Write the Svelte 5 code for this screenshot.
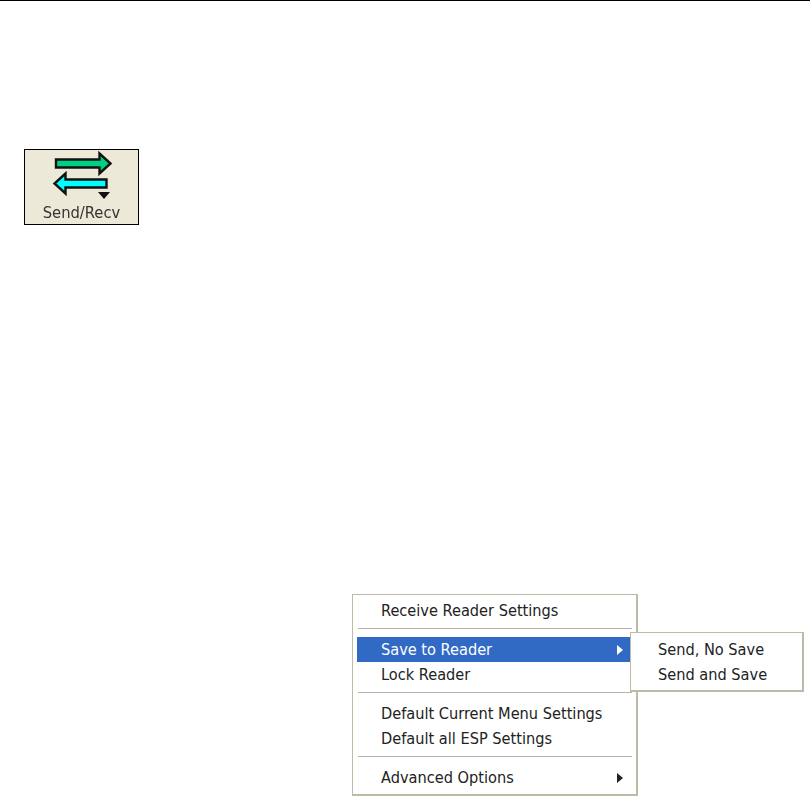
<script>
  const groups = [
    [{ label: 'Receive Reader Settings' }],
    [{ label: 'Save to Reader', active: true, arrow: true }, { label: 'Lock Reader' }],
    [{ label: 'Default Current Menu Settings' }, { label: 'Default all ESP Settings' }],
    [{ label: 'Advanced Options', arrow: true }]
  ];
</script>

<div class="page">
  <div class="rule"></div>
  <div class="button">
    <svg class="icon" width="113" height="50" viewBox="0 0 113 50">
      <path d="M31 9.500H74.500V3.500L85.500 13.500L74.500 23.500V17.500H31Z" fill="#00d084" stroke="#111" stroke-width="2.400"/>
      <path d="M81.500 29.500H40.500V23.500L29.500 33.500L40.500 43.500V37.500H81.500Z" fill="#00ffff" stroke="#111" stroke-width="2.400"/>
      <path d="M73 42H85L79 49Z" fill="#111"/>
    </svg>
    <span class="btn-label">Send/Recv</span>
  </div>

  <div class="menu">
    {#each groups as group, i}
      {#if i > 0}<div class="sep"></div>{/if}
      {#each group as item}
        <div class="item" class:active={item.active}>
          <span>{item.label}</span>
          {#if item.arrow}<i class="arrow"></i>{/if}
        </div>
      {/each}
    {/each}
    <div class="submenu">
      <div class="item sub">Send, No Save</div>
      <div class="item sub">Send and Save</div>
    </div>
  </div>
</div>

<style>
  :global(body) {
    margin: 0;
    background: #fff;
  }
  .page {
    height: 804px;
    overflow: hidden;
    font-family: "DejaVu Sans Condensed", "DejaVu Sans", sans-serif;
    font-stretch: condensed;
    color: #222;
  }
  .rule {
    height: 1px;
    background: #000;
  }
  .button {
    box-sizing: border-box;
    width: 115px;
    height: 76px;
    margin: 148px 0 0 24px;
    background: #ece9d8;
    border: 1px solid #000;
    display: flex;
    flex-direction: column;
    align-items: center;
    filter: blur(0.3px);
  }
  .icon {
    display: block;
    flex: none;
  }
  .btn-label {
    font-size: 16.400px;
    line-height: 18px;
    margin-top: 4px;
    color: #333;
  }
  .menu {
    box-sizing: border-box;
    position: relative;
    width: 286px;
    height: 202px;
    margin: 369px 0 0 352px;
    padding: 3px 8px 0 4px;
    background: #fff;
    border: 2px solid #bdbaa8;
    border-width: 1px 2px 2px 1px;
    font-size: 16.200px;
    filter: blur(0.3px);
  }
  .item {
    height: 25px;
    display: flex;
    align-items: center;
    justify-content: space-between;
    padding: 0 8px 0 24px;
    white-space: nowrap;
  }
  .item.active {
    background: #316ac5;
    color: #fff;
    margin-right: -2px;
    padding-right: 10px;
  }
  .sep {
    height: 1px;
    background: #b8b5a8;
    margin: 5px -4px 8px 1px;
  }
  .arrow {
    width: 0;
    height: 0;
    border-left: 6px solid currentColor;
    border-top: 5px solid transparent;
    border-bottom: 5px solid transparent;
    margin-right: -3px;
  }
  .submenu {
    box-sizing: border-box;
    position: absolute;
    left: 277px;
    top: 37px;
    width: 174px;
    height: 60px;
    padding: 4px 2px;
    background: #fff;
    border: 2px solid #bdbaa8;
    border-width: 1px 2px 2px 1px;
  }
  .sub {
    padding-left: 25px;
  }
</style>
